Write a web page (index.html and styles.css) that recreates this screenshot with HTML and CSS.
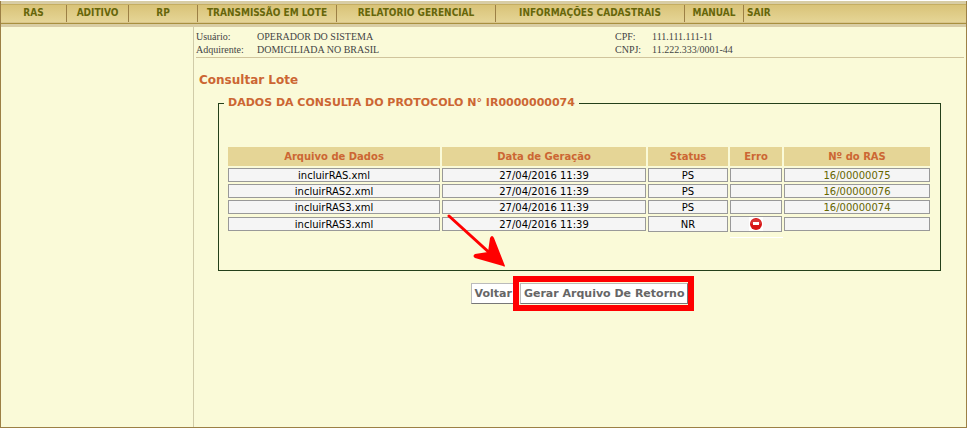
FILE: index.html
```html
<!DOCTYPE html>
<html lang="pt-BR">
<head>
<meta charset="utf-8">
<title>Consultar Lote</title>
<link rel="stylesheet" href="styles.css">
</head>
<body>
<div class="app">
  <nav class="menu">
    <a class="item ras" href="#">RAS</a>
    <a class="item aditivo" href="#">ADITIVO</a>
    <a class="item rp" href="#">RP</a>
    <a class="item lote" href="#">TRANSMISSÃO EM LOTE</a>
    <a class="item relatorio" href="#">RELATORIO GERENCIAL</a>
    <a class="item cadastro" href="#">INFORMAÇÕES CADASTRAIS</a>
    <a class="item manual" href="#">MANUAL</a>
    <a class="item sair" href="#">SAIR</a>
  </nav>
  <div class="columns">
    <aside class="side"></aside>
    <main class="content">
      <dl class="user">
        <dt>Usuário:</dt><dd>OPERADOR DO SISTEMA</dd><dt>CPF:</dt><dd>111.111.111-11</dd>
        <dt>Adquirente:</dt><dd>DOMICILIADA NO BRASIL</dd><dt>CNPJ:</dt><dd>11.222.333/0001-44</dd>
      </dl>
      <h1>Consultar Lote</h1>
      <form class="consulta">
        <fieldset>
          <legend>DADOS DA CONSULTA DO PROTOCOLO N° IR0000000074</legend>
          <table>
            <colgroup><col class="c-file"><col class="c-date"><col class="c-status"><col class="c-error"><col class="c-number"></colgroup>
            <thead>
              <tr><th>Arquivo de Dados</th><th>Data de Geração</th><th>Status</th><th>Erro</th><th>Nº do RAS</th></tr>
            </thead>
            <tbody>
              <tr><td><div class="box">incluirRAS.xml</div></td><td><div class="box">27/04/2016 11:39</div></td><td><div class="box">PS</div></td><td><div class="box"></div></td><td><div class="box"><a href="#">16/00000075</a></div></td></tr>
              <tr><td><div class="box">incluirRAS2.xml</div></td><td><div class="box">27/04/2016 11:39</div></td><td><div class="box">PS</div></td><td><div class="box"></div></td><td><div class="box"><a href="#">16/00000076</a></div></td></tr>
              <tr><td><div class="box">incluirRAS3.xml</div></td><td><div class="box">27/04/2016 11:39</div></td><td><div class="box">PS</div></td><td><div class="box"></div></td><td><div class="box"><a href="#">16/00000074</a></div></td></tr>
              <tr><td><div class="box">incluirRAS3.xml</div></td><td><div class="box">27/04/2016 11:39</div></td><td><div class="box tall">NR</div></td><td><div class="box tall underlined">
                <svg class="error-icon" viewBox="0 0 14 14" role="img" aria-label="Erro"><rect width="14" height="14" fill="#fff"/><circle cx="7" cy="7" r="6" fill="#d81414"/><path d="M1.7 7a5.3 5.3 0 0 1 10.6 0" fill="#d93636"/><rect x="4" y="5" width="6" height="3" fill="#fff"/></svg></div></td><td><div class="box"></div></td></tr>
            </tbody>
          </table>
        </fieldset>
        <div class="actions">
          <button type="button">Voltar</button>
          <span class="highlight"><button type="button">Gerar Arquivo De Retorno</button>
            <svg class="arrow" viewBox="0 0 58 54" aria-hidden="true"><path d="M2 3L45 42" stroke="#f00" stroke-width="3" stroke-linecap="round"/><path d="M58 53Q58 54 56 53L28 45Q25 43 28 41L41 39L43 25Q45 21 47 25Z" fill="#f00"/></svg>
          </span>
        </div>
      </form>
    </main>
  </div>
</div>
</body>
</html>
```
FILE: styles.css
```css
* { box-sizing: border-box; }
body {
  margin: 0;
  padding: 1px 1px 0 0;
  background: #fff;
  font-family: Verdana, "DejaVu Sans", sans-serif;
  font-size: 10px;
}
.app {
  display: flex;
  flex-direction: column;
  min-height: calc(100vh - 1px);
  background: #fafad8;
  border: 1px solid #9c8045;
  border-top: 0;
}
.menu {
  display: flex;
  height: 26px;
  padding-top: 1px;
  border-top: 3px solid #d8cda5;
  border-bottom: 3px solid #d8cda5;
  background: linear-gradient(#c5ae62 0 1px, #d9c378 1px, #e5d596 18px, #d8c58b 18px 19px, #a8903f 19px);
}
.item {
  height: 17px;
  border-right: 1px solid #9c8045;
  font-family: "DejaVu Sans Condensed", "DejaVu Sans", sans-serif;
  font-weight: bold;
  line-height: 16px;
  text-align: center;
  text-decoration: none;
  white-space: nowrap;
  color: #66660a;
}
.ras { width: 66px; }
.aditivo { width: 62px; }
.rp { width: 69px; }
.lote { width: 139px; }
.relatorio { width: 159px; }
.cadastro { width: 189px; }
.manual { width: 59px; }
.sair { flex: 1; padding-left: 3px; border: 0; text-align: left; }
.columns { display: flex; flex: 1; }
.side { width: 193px; border-right: 1px solid #d0cba8; }
.content { flex: 1; padding: 3px 2px 0; }
.user {
  display: grid;
  grid-template-columns: 61px 358px 37px 1fr;
  margin: 0;
  padding-bottom: 1px;
  border-bottom: 1px solid #d0c49c;
  font-family: "Liberation Serif", serif;
  line-height: 13px;
  color: #444;
}
.user dd { margin: 0; }
h1 {
  margin: 14px 3px 8px;
  font-size: 12px;
  line-height: 16px;
  color: #cc6633;
}
.consulta { padding: 0 23px 0 22px; }
fieldset {
  margin: 0;
  padding: 35px 8px 36px 5px;
  border: 1px solid #24401a;
}
legend { padding: 0 4px; font-size: 11px; font-weight: bold; line-height: 14px; color: #cc6633; }
table { width: calc(100% - 2px); margin-left: 2px; border-spacing: 2px; table-layout: fixed; }
.c-file { width: 212px; }
.c-date { width: 204px; }
.c-status { width: 80px; }
.c-error { width: 52px; }
th { height: 19px; padding: 0; background: #e5d596; color: #cc6633; }
td { padding: 0; vertical-align: middle; }
.box {
  height: 14px;
  border: 1px solid #999;
  background: #f5f5f5;
  line-height: 13px;
  text-align: center;
  color: #000;
}
.box a { color: #660; text-decoration: none; }
.tall { height: 16px; line-height: 15px; }
.underlined { position: relative; }
.underlined::after { content: ""; position: absolute; left: -1px; right: -2px; bottom: -7px; height: 1px; background: #fff; }
.error-icon { display: block; width: 14px; height: 14px; margin: 0 auto; }
.actions { display: flex; justify-content: center; gap: 4px; padding-top: 12px; }
button {
  height: 21px;
  padding: 0 3px;
  border: 1px solid;
  border-color: #bbb #777 #777 #bbb;
  background: #fff;
  font: bold 11px Verdana, "DejaVu Sans", sans-serif;
  color: #666;
}
.highlight { position: relative; }
.highlight::after { content: ""; position: absolute; inset: -7px -6px -7px -7px; border: 6px solid #f00; }
.arrow { position: absolute; left: -73px; top: -70px; width: 58px; height: 54px; }
```
